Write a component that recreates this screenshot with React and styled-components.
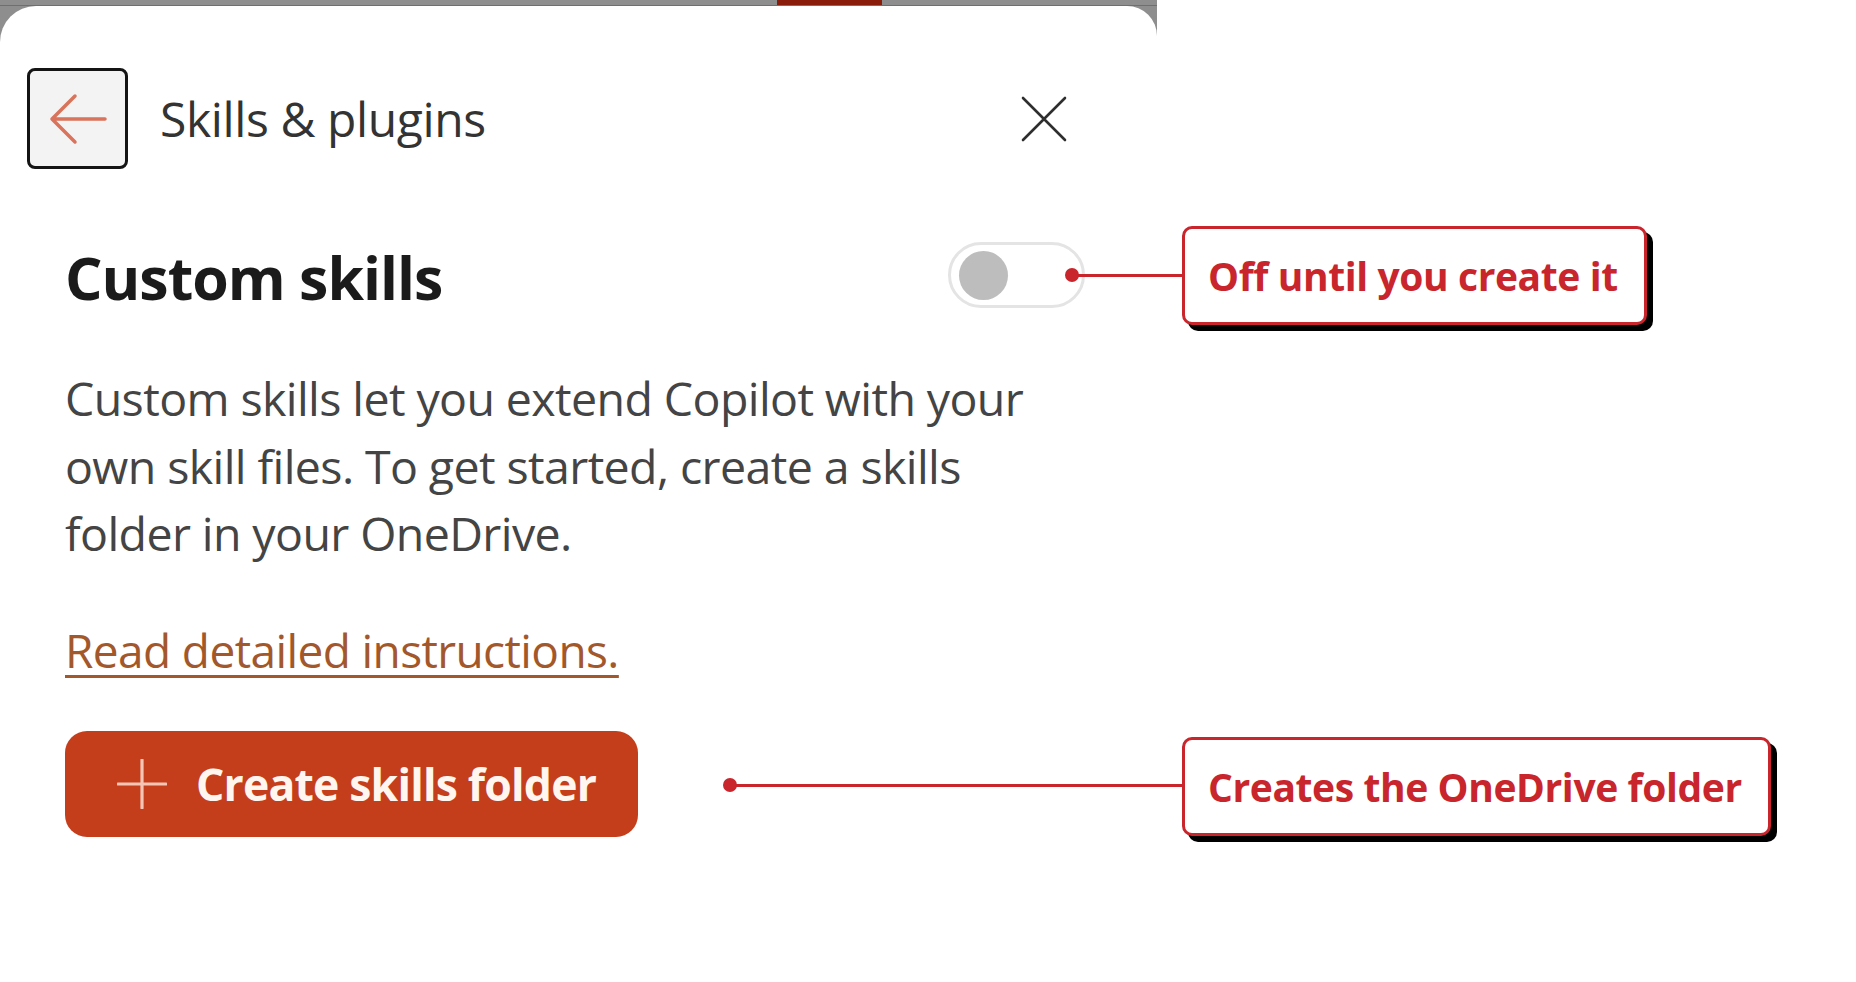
import React from 'react';
import styled, { createGlobalStyle } from 'styled-components';

const GlobalStyle = createGlobalStyle`
  html, body {
    margin: 0;
    padding: 0;
    background: #ffffff;
  }
  body {
    font-family: 'Open Sans', 'Noto Sans', Arial, sans-serif;
  }
`;

const noteRed = '#c9252c';

const Page = styled.div`
  position: relative;
  display: flex;
  width: 1856px;
  height: 982px;
  overflow: hidden;
  background: #ffffff;
`;

// host window behind the pane: grey strip with a tab peeking out
const Frame = styled.div`
  display: flex;
  flex-direction: column;
  width: 1157px;
  padding-top: 6px;
  background:
    linear-gradient(to bottom, transparent 5px, #6f6f6f 5px, #6f6f6f 6px, transparent 6px),
    linear-gradient(
      to right,
      #8e8e8e 777px,
      #8a1c0c 777px,
      #8a1c0c 882px,
      #8e8e8e 882px
    );
  background-repeat: no-repeat;
  background-size: 100% 6px, 100% 6px;
  background-color: #8e8e8e;
`;

const Panel = styled.section`
  flex: 1;
  display: flex;
  flex-direction: column;
  background: #ffffff;
  border-radius: 36px 30px 0 0;
  padding: 62px 0 0 27px;
`;

const Header = styled.header`
  display: flex;
  align-items: center;
  padding-right: 90px;
`;

const BackButton = styled.button`
  display: flex;
  align-items: center;
  justify-content: center;
  width: 101px;
  height: 101px;
  padding: 0;
  border: 3px solid #141414;
  border-radius: 8px;
  background: #f3f3f3;
  cursor: pointer;
`;

const Title = styled.h1`
  margin: 0 0 0 32px;
  font-size: 48px;
  font-weight: 400;
  color: #333333;
  letter-spacing: -0.4px;
`;

const CloseButton = styled.button`
  display: flex;
  margin-left: auto;
  padding: 0;
  border: 0;
  background: none;
  cursor: pointer;
`;

const Body = styled.div`
  display: flex;
  flex-direction: column;
  align-items: flex-start;
  padding-left: 38px;
  width: 1020px;
`;

const SectionRow = styled.div`
  display: flex;
  align-items: center;
  justify-content: space-between;
  align-self: stretch;
  margin-top: 73px;
  height: 66px;
`;

const Heading = styled.h2`
  margin: 4px 0 0;
  font-size: 59px;
  font-weight: 700;
  color: #1b1b1b;
  letter-spacing: -1px;
`;

const Track = styled.span`
  display: flex;
  align-items: center;
  box-sizing: border-box;
  width: 137px;
  height: 66px;
  padding-left: 8px;
  border: 3px solid #e4e4e4;
  border-radius: 33px;
  background: #ffffff;
`;

const Knob = styled.span`
  width: 49px;
  height: 49px;
  border-radius: 50%;
  background: #bdbdbd;
`;

const Description = styled.p`
  margin: 57px 0 0;
  font-size: 46.5px;
  line-height: 67.5px;
  color: #444444;
  letter-spacing: -0.6px;
`;

const DocLink = styled.a`
  margin-top: 52px;
  font-size: 46px;
  line-height: 60px;
  color: #a3582c;
  text-decoration: underline;
  text-decoration-thickness: 3px;
  text-underline-offset: 7px;
  letter-spacing: -0.6px;
`;

const PrimaryButton = styled.button`
  display: flex;
  align-items: center;
  gap: 29px;
  margin-top: 51px;
  height: 106px;
  padding: 0 42px 0 52px;
  border: 0;
  border-radius: 22px;
  background: #c43e1c;
  color: #fff6f0;
  font-family: inherit;
  font-size: 44.5px;
  font-weight: 700;
  letter-spacing: -0.8px;
  cursor: pointer;
`;

// annotation layer drawn over the page
const Leader = styled.div`
  position: absolute;
  left: ${(p) => p.$x}px;
  top: ${(p) => p.$y - 1.5}px;
  width: ${(p) => p.$length}px;
  height: 3px;
  background: ${noteRed};

  &::before {
    content: '';
    position: absolute;
    left: -7px;
    top: -5.5px;
    width: 14px;
    height: 14px;
    border-radius: 50%;
    background: ${noteRed};
  }
`;

const Callout = styled.div`
  position: absolute;
  left: ${(p) => p.$x}px;
  top: ${(p) => p.$y}px;
  display: flex;
  align-items: center;
  box-sizing: border-box;
  height: 99px;
  padding: 0 26px 0 23px;
  border: 3px solid ${noteRed};
  border-radius: 10px;
  background: #ffffff;
  box-shadow: 6px 6px 0 #000000;
  color: ${noteRed};
  font-size: 39px;
  font-weight: 700;
  letter-spacing: -0.4px;
  white-space: nowrap;
`;

const ArrowLeftIcon = () => (
  <svg width="58" height="52" viewBox="0 0 58 52" fill="none">
    <path
      d="M56 26H3M3 26L26 3M3 26L26 49"
      stroke="#d9735b"
      strokeWidth="3.5"
      strokeLinecap="round"
      strokeLinejoin="round"
    />
  </svg>
);

const CloseIcon = () => (
  <svg width="46" height="46" viewBox="0 0 46 46" fill="none">
    <path d="M2 2L44 44M44 2L2 44" stroke="#2e2e2e" strokeWidth="2.6" strokeLinecap="round" />
  </svg>
);

const PlusIcon = () => (
  <svg width="50" height="50" viewBox="0 0 50 50" fill="none">
    <path d="M25 1V49M1 25H49" stroke="#f5c6b6" strokeWidth="3.2" strokeLinecap="round" />
  </svg>
);

const App = () => (
  <Page>
    <GlobalStyle />
    <Frame>
      <Panel>
        <Header>
          <BackButton aria-label="Back">
            <ArrowLeftIcon />
          </BackButton>
          <Title>Skills &amp; plugins</Title>
          <CloseButton aria-label="Close">
            <CloseIcon />
          </CloseButton>
        </Header>

        <Body>
          <SectionRow>
            <Heading>Custom skills</Heading>
            <Track role="switch" aria-checked="false">
              <Knob />
            </Track>
          </SectionRow>

          <Description>
            Custom skills let you extend Copilot with your
            <br />
            own skill files. To get started, create a skills
            <br />
            folder in your OneDrive.
          </Description>

          <DocLink href="#">Read detailed instructions.</DocLink>

          <PrimaryButton>
            <PlusIcon />
            Create skills folder
          </PrimaryButton>
        </Body>
      </Panel>
    </Frame>

    <Leader $x={1072} $y={275} $length={110} />
    <Callout $x={1182} $y={226}>Off until you create it</Callout>

    <Leader $x={730} $y={785} $length={452} />
    <Callout $x={1182} $y={737}>Creates the OneDrive folder</Callout>
  </Page>
);

export default App;
